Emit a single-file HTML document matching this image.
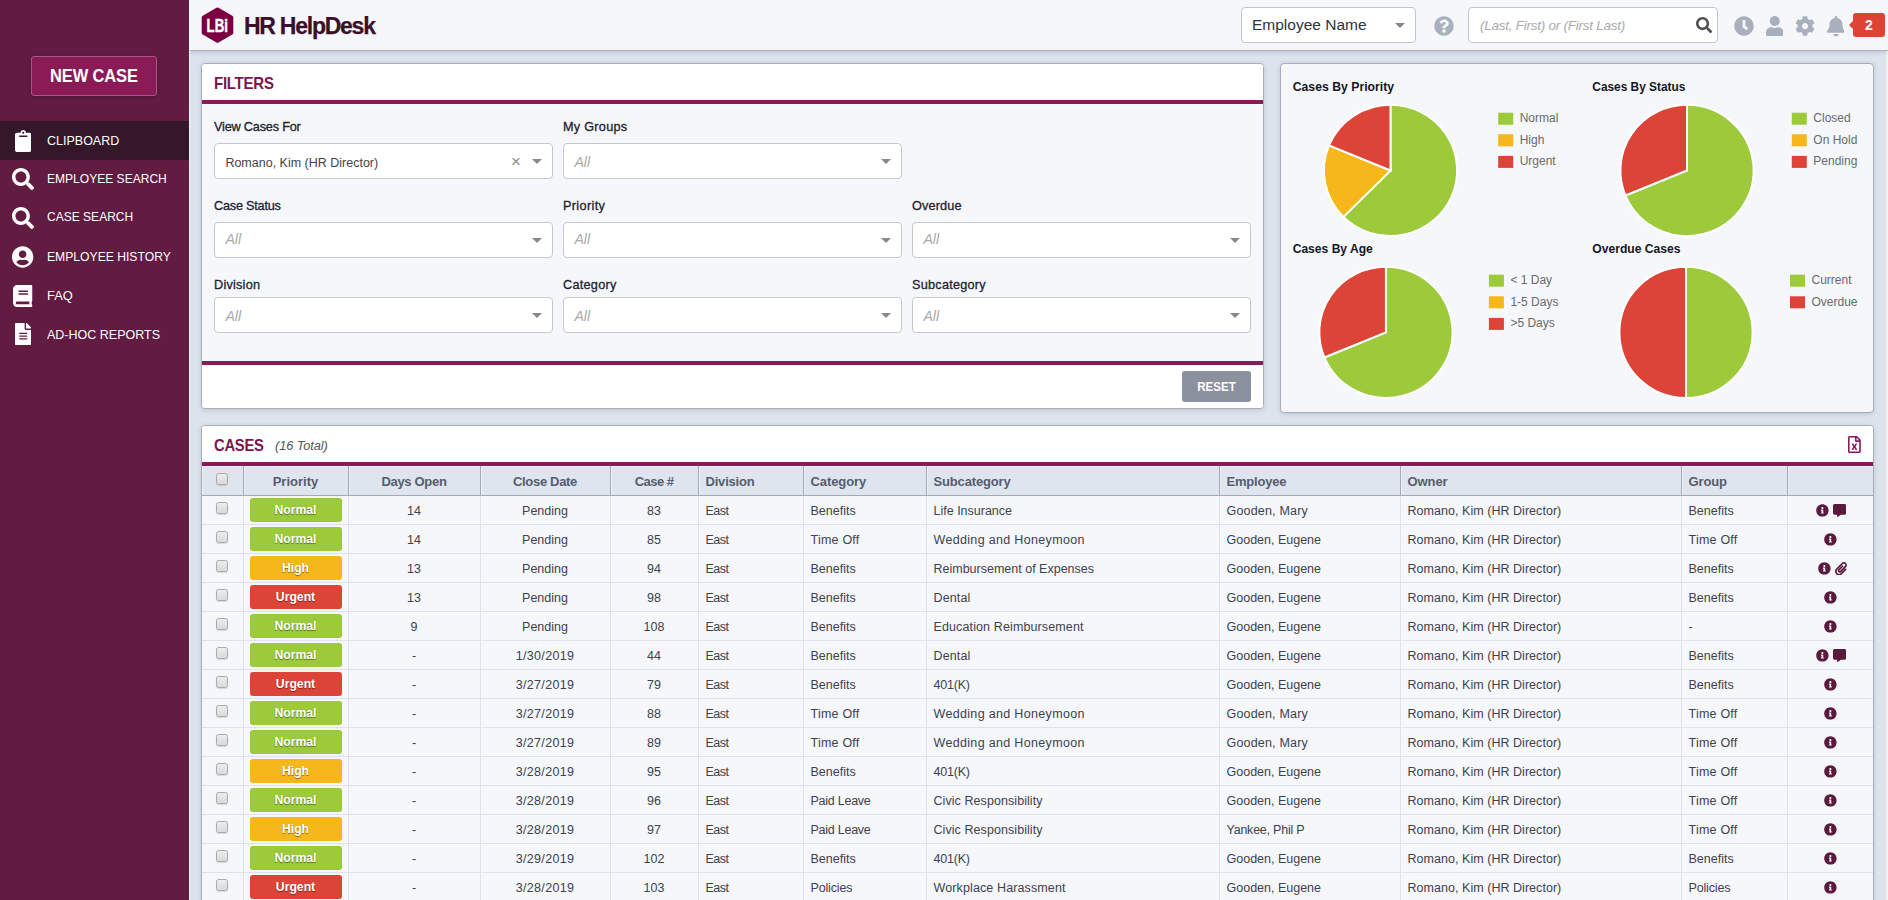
<!DOCTYPE html>
<html lang="en"><head><meta charset="utf-8"><title>HR HelpDesk</title>
<style>
*{box-sizing:border-box}
html,body{margin:0;padding:0}
html{width:1888px;height:900px;overflow:hidden}
body{width:1888px;height:900px;overflow:hidden;position:relative;background:#DDE3EC;font-family:"Liberation Sans",Arial,sans-serif;font-size:12.5px;color:#3a3f4a}
.ic{display:inline-block;vertical-align:middle}
#side{position:absolute;left:0;top:0;width:189px;height:900px;background:#621B41;box-shadow:1px 0 0 rgba(240,246,252,.8);z-index:5}
#newcase{position:absolute;left:31px;top:56px;width:126px;height:40px;border:1px solid #A55A84;border-radius:3px;background:#8A1B57;color:#fff;font-weight:bold;font-size:18px;line-height:39.4px;text-align:center;letter-spacing:-.15px;box-shadow:0 1px 3px rgba(0,0,0,.25)}
.nv{position:absolute;left:0;width:189px;height:38.8px;color:#fff}
.nv.act{background:#35172A}
.ni{position:absolute;left:3px;width:40px;top:0;height:38.8px;display:flex;align-items:center;justify-content:center}
.nt{position:absolute;left:47px;top:.6px;line-height:38.8px;font-size:13.5px;white-space:nowrap;transform-origin:0 50%;transform:scaleX(.905)}
#hdr{position:absolute;left:189px;top:0;width:1699px;height:51px;background:#F5F7FA;border-bottom:1px solid #A8AFBD;box-shadow:0 1px 5px rgba(60,75,100,.22);z-index:4}
#logo{position:absolute}
#ttl{position:absolute;left:55px;top:.8px;line-height:51px;font-size:23px;font-weight:bold;color:#3B0F28;letter-spacing:-1.25px;-webkit-text-stroke:.25px #3B0F28;white-space:nowrap}
.box{position:absolute;background:#fff;border:1px solid #C6C6C6;border-radius:4px}
.ar{position:absolute;width:0;height:0;border-left:5px solid transparent;border-right:5px solid transparent;border-top:5px solid #888}
.panel{position:absolute;border:1px solid #A6AEBD;border-radius:4px;background:#F5F7FB;box-shadow:0 1px 4px rgba(60,75,100,.2);overflow:hidden}
.ph{color:#AAA;font-style:italic;font-size:14.2px}
.pt{position:absolute;left:0;right:0;top:0;height:36px;background:#fff}
.pl{position:absolute;left:0;right:0;height:4px;background:#8A1A55}
.ptx{position:absolute;left:12px;top:.6px;line-height:37px;font-size:17px;font-weight:bold;color:#7C164C;letter-spacing:-.3px;white-space:nowrap;transform-origin:0 50%;transform:scaleX(.884)}
.lbl{position:absolute;font-size:12.7px;color:#1E2230;white-space:nowrap;line-height:16px;margin-top:.8px;-webkit-text-stroke:.3px #1E2230}
.sel{position:absolute;width:339px;height:36px;background:#fff;border:1px solid #C8C8C8;border-radius:4px;line-height:34px;padding-left:10.4px;white-space:nowrap}
.sel .ar{right:10px;top:15px}
.sel .sv{color:#444;font-size:12.5px}
.clr{position:absolute;right:31px;top:1px;font-size:17px;color:#8E8E8E}
#reset{position:absolute;left:980px;top:307px;width:69px;height:31px;border-radius:3px;background:#8B919E;color:#fff;font-weight:bold;font-size:13.5px;line-height:31.6px;text-align:center}
svg text{font-family:"Liberation Sans",Arial,sans-serif}
.ct{font-weight:bold;font-size:13.7px;fill:#15161F}
.lg text{font-size:12px;fill:#6A6A6A}
table{position:absolute;left:0;top:40px;width:1671px;border-collapse:collapse;table-layout:fixed}
th{height:29px;background:#DFE5EE;border-right:1px solid #A3ABBA;border-bottom:1px solid #A3ABBA;box-shadow:inset 1px 1px 0 rgba(255,255,255,.45);color:#555C6F;font-weight:bold;font-size:13px;text-align:left;padding:2.4px 0 0 7px}
td{height:29px;border-right:1px solid #DDE2EB;border-bottom:1px solid #DDE2EB;padding:2px 0 0 7px;color:#3E424C;white-space:nowrap;overflow:hidden}
th.c,td.c{text-align:center;padding-left:0}
th:last-child,td:last-child{border-right:0}
.cb{display:inline-block;width:12px;height:12px;border:1px solid #A9A9A9;border-radius:2.5px;background:linear-gradient(#ECECEC,#DADADA);box-shadow:0 1px 1px rgba(0,0,0,.12);vertical-align:middle;position:relative;top:-3px}
th .cb{top:-3.7px}
.pb{display:inline-block;width:92px;height:24px;border-radius:3px;color:#fff;font-weight:bold;font-size:12.2px;line-height:24.8px;text-shadow:0 1px 1px rgba(0,0,0,.45);vertical-align:middle;position:relative;top:-1px}
.pb.n{background:#9CCA3B}.pb.h{background:#F5B719}.pb.u{background:#DC4437}
.ics{font-size:0}
.w0{letter-spacing:-0.55px}.w1{letter-spacing:0.19px}.w2{letter-spacing:0.04px}.w3{letter-spacing:0.22px}.w4{letter-spacing:0.33px}.w5{letter-spacing:0.14px}.w6{letter-spacing:0.12px}.w7{letter-spacing:0.32px}.w8{letter-spacing:-0.2px}.w9{letter-spacing:-0.25px}.w10{letter-spacing:0.07px}.w11{letter-spacing:-0.23px}.w12{letter-spacing:-0.16px}
</style></head><body>

<div id="side">
<div id="newcase"><span style="display:inline-block;transform:scaleX(.915)">NEW CASE</span></div>
<div class="nv act" style="top:121px"><span class="ni"><svg class="ic" width="16.5" height="22" viewBox="0 0 384 512" style="position:relative;top:1px"><path fill="#fff" d="M384 112v352c0 26.51-21.49 48-48 48H48c-26.51 0-48-21.49-48-48V112c0-26.51 21.49-48 48-48h80c0-35.29 28.71-64 64-64s64 28.71 64 64h80c26.51 0 48 21.49 48 48zM192 40c-13.255 0-24 10.745-24 24s10.745 24 24 24 24-10.745 24-24-10.745-24-24-24m96 114v-20a6 6 0 0 0-6-6H102a6 6 0 0 0-6 6v20a6 6 0 0 0 6 6h180a6 6 0 0 0 6-6z"/></svg></span><span class="nt" style="transform:scaleX(0.926)">CLIPBOARD</span></div><div class="nv" style="top:159.8px"><span class="ni"><svg class="ic" width="22" height="22" viewBox="0 0 512 512" style=""><path fill="#fff" d="M505 442.7L405.3 343c-4.5-4.5-10.6-7-17-7H372c27.6-35.3 44-79.7 44-128C416 93.1 322.9 0 208 0S0 93.1 0 208s93.1 208 208 208c48.3 0 92.7-16.4 128-44v16.3c0 6.4 2.5 12.5 7 17l99.7 99.7c9.4 9.4 24.6 9.4 33.9 0l28.3-28.3c9.4-9.4 9.4-24.6.1-34zM208 336c-70.7 0-128-57.2-128-128 0-70.7 57.2-128 128-128 70.7 0 128 57.2 128 128 0 70.7-57.2 128-128 128z"/></svg></span><span class="nt" style="transform:scaleX(0.892)">EMPLOYEE SEARCH</span></div><div class="nv" style="top:198.6px"><span class="ni"><svg class="ic" width="22" height="22" viewBox="0 0 512 512" style=""><path fill="#fff" d="M505 442.7L405.3 343c-4.5-4.5-10.6-7-17-7H372c27.6-35.3 44-79.7 44-128C416 93.1 322.9 0 208 0S0 93.1 0 208s93.1 208 208 208c48.3 0 92.7-16.4 128-44v16.3c0 6.4 2.5 12.5 7 17l99.7 99.7c9.4 9.4 24.6 9.4 33.9 0l28.3-28.3c9.4-9.4 9.4-24.6.1-34zM208 336c-70.7 0-128-57.2-128-128 0-70.7 57.2-128 128-128 70.7 0 128 57.2 128 128 0 70.7-57.2 128-128 128z"/></svg></span><span class="nt" style="transform:scaleX(0.891);top:-.4px">CASE SEARCH</span></div><div class="nv" style="top:237.4px"><span class="ni"><svg class="ic" width="21.31" height="22" viewBox="0 0 496 512" style=""><path fill="#fff" d="M248 8C111 8 0 119 0 256s111 248 248 248 248-111 248-248S385 8 248 8zm0 96c48.6 0 88 39.4 88 88s-39.4 88-88 88-88-39.4-88-88 39.4-88 88-88zm0 344c-58.7 0-111.3-26.6-146.5-68.2 18.8-35.4 55.6-59.8 98.5-59.8 2.4 0 4.8.4 7.1 1.1 13 4.2 26.6 6.9 40.9 6.9 14.3 0 28-2.7 40.9-6.9 2.3-.7 4.7-1.1 7.1-1.1 42.9 0 79.7 24.4 98.5 59.8C359.3 421.4 306.7 448 248 448z"/></svg></span><span class="nt" style="transform:scaleX(0.9)">EMPLOYEE HISTORY</span></div><div class="nv" style="top:276.2px"><span class="ni"><svg class="ic" width="19.25" height="22" viewBox="0 0 448 512" style=""><path fill="#fff" d="M448 360V24c0-13.3-10.7-24-24-24H96C43 0 0 43 0 96v320c0 53 43 96 96 96h328c13.3 0 24-10.7 24-24v-16c0-7.5-3.5-14.3-8.9-18.7-4.2-15.4-4.2-59.3 0-74.7 5.4-4.3 8.9-11.1 8.9-18.6zM128 134c0-3.3 2.7-6 6-6h212c3.3 0 6 2.7 6 6v20c0 3.3-2.7 6-6 6H134c-3.3 0-6-2.7-6-6v-20zm0 64c0-3.3 2.7-6 6-6h212c3.3 0 6 2.7 6 6v20c0 3.3-2.7 6-6 6H134c-3.3 0-6-2.7-6-6v-20zm253.4 250H96c-17.7 0-32-14.3-32-32 0-17.6 14.4-32 32-32h285.4c-1.9 17.1-1.9 46.9 0 64z"/></svg></span><span class="nt" style="transform:scaleX(0.953)">FAQ</span></div><div class="nv" style="top:315px"><span class="ni"><svg class="ic" width="16.5" height="22" viewBox="0 0 384 512" style=""><path fill="#fff" d="M224 136V0H24C10.7 0 0 10.7 0 24v464c0 13.3 10.7 24 24 24h336c13.3 0 24-10.7 24-24V160H248c-13.2 0-24-10.8-24-24zm64 236c0 6.6-5.4 12-12 12H108c-6.6 0-12-5.4-12-12v-8c0-6.6 5.4-12 12-12h168c6.6 0 12 5.4 12 12v8zm0-64c0 6.6-5.4 12-12 12H108c-6.6 0-12-5.4-12-12v-8c0-6.6 5.4-12 12-12h168c6.6 0 12 5.4 12 12v8zm0-72v8c0 6.6-5.4 12-12 12H108c-6.6 0-12-5.4-12-12v-8c0-6.6 5.4-12 12-12h168c6.6 0 12 5.4 12 12zm96-114.1v6.1H256V0h6.1c6.4 0 12.5 2.5 17 7l97.9 98c4.5 4.5 7 10.6 7 16.9z"/></svg></span><span class="nt" style="transform:scaleX(0.926)">AD-HOC REPORTS</span></div>
</div>

<div id="hdr">
<svg id="logo" width="35" height="40" viewBox="0 0 35 40" style="left:11px;top:5px"><path d="M18.5 2.8L32.3 10.8Q33.3 11.4 33.3 12.5V27.9Q33.3 29 32.3 29.6L18.5 37.6Q17.5 38.2 16.5 37.6L2.7 29.6Q1.7 29 1.7 27.9V12.5Q1.7 11.4 2.7 10.8L16.5 2.8Q17.5 2.2 18.5 2.8Z" fill="#7B0041"/><text transform="translate(17.3 26.6) scale(.76 1)" x="0" y="0" text-anchor="middle" font-size="17.5" font-weight="bold" fill="#fff" stroke="#fff" stroke-width=".5">LBi</text></svg>
<div id="ttl">HR HelpDesk</div>
<div class="box" style="left:1052px;top:7px;width:175px;height:36px"><span style="position:absolute;left:10px;top:0;line-height:34px;font-size:15.5px;color:#2E3340;white-space:nowrap;margin-top:.4px">Employee Name</span><i class="ar" style="left:153px;top:15px"></i></div>
<div style="position:absolute;left:1245px;top:16px;line-height:0"><svg class="ic" width="20" height="20" viewBox="0 0 512 512" style=""><path fill="#A9B0BE" d="M504 256c0 136.997-111.043 248-248 248S8 392.997 8 256C8 119.083 119.043 8 256 8s248 111.083 248 248zM262.655 90c-54.497 0-89.255 22.957-116.549 63.758-3.536 5.286-2.353 12.415 2.715 16.258l34.699 26.31c5.205 3.947 12.621 3.008 16.665-2.122 17.864-22.658 30.113-35.797 57.303-35.797 20.429 0 45.698 13.148 45.698 32.958 0 14.976-12.363 22.667-32.534 33.976C247.128 238.528 216 254.941 216 296v4c0 6.627 5.373 12 12 12h56c6.627 0 12-5.373 12-12v-1.333c0-28.462 83.186-29.647 83.186-106.667 0-58.002-60.165-102-116.531-102zM256 338c-25.365 0-46 20.635-46 46 0 25.364 20.635 46 46 46s46-20.636 46-46c0-25.365-20.635-46-46-46z"/></svg></div>
<div class="box" style="left:1279px;top:7px;width:250px;height:36px"><span class="ph" style="position:absolute;left:11px;top:0;line-height:35px;font-size:13.5px;letter-spacing:-.25px;white-space:nowrap">(Last, First) or (First Last)</span><span style="position:absolute;left:227px;top:9px;line-height:0"><svg class="ic" width="16.2" height="16.2" viewBox="0 0 512 512" style=""><path fill="#525252" d="M505 442.7L405.3 343c-4.5-4.5-10.6-7-17-7H372c27.6-35.3 44-79.7 44-128C416 93.1 322.9 0 208 0S0 93.1 0 208s93.1 208 208 208c48.3 0 92.7-16.4 128-44v16.3c0 6.4 2.5 12.5 7 17l99.7 99.7c9.4 9.4 24.6 9.4 33.9 0l28.3-28.3c9.4-9.4 9.4-24.6.1-34zM208 336c-70.7 0-128-57.2-128-128 0-70.7 57.2-128 128-128 70.7 0 128 57.2 128 128 0 70.7-57.2 128-128 128z"/></svg></span></div>
<div style="position:absolute;left:1545px;top:16px;line-height:0"><svg class="ic" width="20" height="20" viewBox="0 0 512 512" style=""><path fill="#A8AFBD" d="M256 8C119 8 8 119 8 256s111 248 248 248 248-111 248-248S393 8 256 8zm57.1 350.1L224.9 294c-3.1-2.3-4.9-5.9-4.9-9.7V116c0-6.6 5.4-12 12-12h48c6.6 0 12 5.4 12 12v137.7l63.5 46.2c5.4 3.9 6.5 11.4 2.6 16.8l-28.2 38.8c-3.9 5.3-11.4 6.5-16.8 2.6z"/></svg></div>
<div style="position:absolute;left:1576.5px;top:16px;line-height:0"><svg class="ic" width="17.5" height="20" viewBox="0 0 448 512" style=""><path fill="#A8AFBD" d="M224 256c70.7 0 128-57.3 128-128S294.7 0 224 0 96 57.3 96 128s57.3 128 128 128zm89.6 32h-16.7c-22.2 10.2-46.9 16-72.9 16s-50.6-5.8-72.9-16h-16.7C60.2 288 0 348.2 0 422.4V464c0 26.5 21.5 48 48 48h352c26.5 0 48-21.5 48-48v-41.6c0-74.2-60.2-134.4-134.4-134.4z"/></svg></div>
<div style="position:absolute;left:1606px;top:16px;line-height:0"><svg class="ic" width="20" height="20" viewBox="0 0 512 512" style=""><path fill="#A8AFBD" d="M487.4 315.7l-42.6-24.6c4.3-23.2 4.3-47 0-70.2l42.6-24.6c4.9-2.8 7.1-8.6 5.5-14-11.1-35.6-30-67.8-54.7-94.6-3.8-4.1-10-5.1-14.8-2.3L380.8 110c-17.9-15.4-38.5-27.3-60.8-35.1V25.8c0-5.6-3.9-10.5-9.4-11.7-36.7-8.2-74.3-7.8-109.2 0-5.5 1.2-9.4 6.1-9.4 11.7V75c-22.2 7.9-42.8 19.8-60.8 35.1L88.7 85.5c-4.9-2.8-11-1.9-14.8 2.3-24.7 26.7-43.6 58.9-54.7 94.6-1.7 5.4.6 11.2 5.5 14L67.3 221c-4.3 23.2-4.3 47 0 70.2l-42.6 24.6c-4.9 2.8-7.1 8.6-5.5 14 11.1 35.6 30 67.8 54.7 94.6 3.8 4.1 10 5.1 14.8 2.3l42.6-24.6c17.9 15.4 38.5 27.3 60.8 35.1v49.2c0 5.6 3.9 10.5 9.4 11.7 36.7 8.2 74.3 7.8 109.2 0 5.5-1.2 9.4-6.1 9.4-11.7v-49.2c22.2-7.9 42.8-19.8 60.8-35.1l42.6 24.6c4.9 2.8 11 1.9 14.8-2.3 24.7-26.7 43.6-58.9 54.7-94.6 1.5-5.5-.7-11.3-5.6-14.1zM256 336c-44.1 0-80-35.9-80-80s35.9-80 80-80 80 35.9 80 80-35.9 80-80 80z"/></svg></div>
<div style="position:absolute;left:1637.5px;top:16px;line-height:0"><svg class="ic" width="17.94" height="20.5" viewBox="0 0 448 512" style=""><path fill="#A8AFBD" d="M224 512c35.32 0 63.97-28.65 63.97-64H160.03c0 35.35 28.65 64 63.97 64zm215.39-149.71c-19.32-20.76-55.47-51.99-55.47-154.29 0-77.7-54.48-139.9-127.94-155.16V32c0-17.67-14.32-32-31.98-32s-31.98 14.33-31.98 32v20.84C118.56 68.1 64.08 130.3 64.08 208c0 102.3-36.15 133.53-55.47 154.29-6 6.45-8.66 14.16-8.61 21.71.11 16.4 12.98 32 32.1 32h383.8c19.12 0 32-15.6 32.1-32 .05-7.55-2.61-15.27-8.61-21.71z"/></svg></div>
<div style="position:absolute;left:1664px;top:13px;width:32px;height:24px;border-radius:3px;background:#DD4436;color:#fff;font-weight:bold;font-size:14px;line-height:24px;text-align:center">2<i style="position:absolute;left:-4px;top:8px;width:0;height:0;border-top:4px solid transparent;border-bottom:4px solid transparent;border-right:4px solid #DD4436"></i></div>
</div>

<div class="panel" id="filters" style="left:201px;top:63px;width:1063px;height:346px">
<div class="pt"><span class="ptx">FILTERS</span></div>
<div class="pl" style="top:36px"></div>
<div class="lbl" style="left:12px;top:54px;letter-spacing:-0.19px">View Cases For</div>
<div class="lbl" style="left:361px;top:54px;letter-spacing:0.26px">My Groups</div>
<div class="lbl" style="left:12px;top:133px;letter-spacing:-0.22px">Case Status</div>
<div class="lbl" style="left:361px;top:133px;letter-spacing:0.34px">Priority</div>
<div class="lbl" style="left:710px;top:133px;letter-spacing:0.13px">Overdue</div>
<div class="lbl" style="left:12px;top:212px;letter-spacing:0.22px">Division</div>
<div class="lbl" style="left:361px;top:212px;letter-spacing:0.26px">Category</div>
<div class="lbl" style="left:710px;top:212px;letter-spacing:0.24px">Subcategory</div>
<div class="sel" style="left:12px;top:79px"><span class="sv" style="position:relative;top:1.8px">Romano, Kim (HR Director)</span><span class="clr">&#215;</span><i class="ar"></i></div><div class="sel" style="left:361px;top:79px"><span class="ph" style="position:relative;top:0.6px">All</span><i class="ar"></i></div><div class="sel" style="left:12px;top:158px"><span class="ph" style="position:relative;top:-0.6px">All</span><i class="ar"></i></div><div class="sel" style="left:361px;top:158px"><span class="ph" style="position:relative;top:-0.6px">All</span><i class="ar"></i></div><div class="sel" style="left:710px;top:158px"><span class="ph" style="position:relative;top:-0.6px">All</span><i class="ar"></i></div><div class="sel" style="left:12px;top:233px"><span class="ph" style="position:relative;top:0.9px">All</span><i class="ar"></i></div><div class="sel" style="left:361px;top:233px"><span class="ph" style="position:relative;top:0.9px">All</span><i class="ar"></i></div><div class="sel" style="left:710px;top:233px"><span class="ph" style="position:relative;top:0.9px">All</span><i class="ar"></i></div>
<div class="pl" style="top:297px"></div>
<div style="position:absolute;left:0;right:0;top:301px;bottom:0;background:#fff"></div>
<div id="reset"><span style="display:inline-block;transform:scaleX(0.858)">RESET</span></div>
</div>

<div class="panel" id="charts" style="left:1280px;top:63px;width:594px;height:350px">
<svg width="592" height="348" viewBox="1281 64 592 348" style="position:absolute;left:0;top:0">
<text class="ct" x="1292.7" y="91.2" textLength="101.4" lengthAdjust="spacingAndGlyphs">Cases By Priority</text>
<text class="ct" x="1592.3" y="91.2" textLength="93.1" lengthAdjust="spacingAndGlyphs">Cases By Status</text>
<text class="ct" x="1292.7" y="253.2" textLength="80.1" lengthAdjust="spacingAndGlyphs">Cases By Age</text>
<text class="ct" x="1592.3" y="253.2" textLength="88.3" lengthAdjust="spacingAndGlyphs">Overdue Cases</text>
<path d="M1390.5 170.45L1390.5 104.85A66.6 65.6 0 1 1 1343.41 216.84Z" fill="#9CCA3B" stroke="#fff" stroke-width="2"/><path d="M1390.5 170.45L1343.41 216.84A66.6 65.6 0 0 1 1328.97 145.35Z" fill="#F5B719" stroke="#fff" stroke-width="2"/><path d="M1390.5 170.45L1328.97 145.35A66.6 65.6 0 0 1 1390.5 104.85Z" fill="#DC4437" stroke="#fff" stroke-width="2"/><path d="M1687 170.45L1687 104.85A66.6 65.6 0 1 1 1625.47 195.55Z" fill="#9CCA3B" stroke="#fff" stroke-width="2"/><path d="M1687 170.45L1625.47 195.55A66.6 65.6 0 0 1 1687 104.85Z" fill="#DC4437" stroke="#fff" stroke-width="2"/><path d="M1385.9 332.4L1385.9 266.8A66.6 65.6 0 1 1 1324.37 357.5Z" fill="#9CCA3B" stroke="#fff" stroke-width="2"/><path d="M1385.9 332.4L1324.37 357.5A66.6 65.6 0 0 1 1385.9 266.8Z" fill="#DC4437" stroke="#fff" stroke-width="2"/><path d="M1686 332.4L1686 266.8A66.6 65.6 0 0 1 1686 398Z" fill="#9CCA3B" stroke="#fff" stroke-width="2"/><path d="M1686 332.4L1686 398A66.6 65.6 0 0 1 1686 266.8Z" fill="#DC4437" stroke="#fff" stroke-width="2"/>
<g class="lg"><rect x="1498.2" y="112.7" width="15" height="12" fill="#9CCA3B"/><text x="1519.7" y="122">Normal</text><rect x="1498.2" y="134.3" width="15" height="12" fill="#F5B719"/><text x="1519.7" y="143.6">High</text><rect x="1498.2" y="155.9" width="15" height="12" fill="#DC4437"/><text x="1519.7" y="165.2">Urgent</text><rect x="1791.8" y="112.7" width="15" height="12" fill="#9CCA3B"/><text x="1813.3" y="122">Closed</text><rect x="1791.8" y="134.3" width="15" height="12" fill="#F5B719"/><text x="1813.3" y="143.6">On Hold</text><rect x="1791.8" y="155.9" width="15" height="12" fill="#DC4437"/><text x="1813.3" y="165.2">Pending</text><rect x="1488.9" y="274.7" width="15" height="12" fill="#9CCA3B"/><text x="1510.4" y="284">&lt; 1 Day</text><rect x="1488.9" y="296.3" width="15" height="12" fill="#F5B719"/><text x="1510.4" y="305.6">1-5 Days</text><rect x="1488.9" y="317.9" width="15" height="12" fill="#DC4437"/><text x="1510.4" y="327.2">&gt;5 Days</text><rect x="1790" y="274.7" width="15" height="12" fill="#9CCA3B"/><text x="1811.5" y="284">Current</text><rect x="1790" y="296.3" width="15" height="12" fill="#DC4437"/><text x="1811.5" y="305.6">Overdue</text></g>
</svg>
</div>

<div class="panel" id="cases" style="left:201px;top:425px;width:1673px;height:490px">
<div class="pt"><span class="ptx" style="transform:scaleX(.87)">CASES</span><span style="position:absolute;left:73px;top:.7px;line-height:37px;font-style:italic;font-size:12.8px;color:#555;letter-spacing:-.1px;white-space:nowrap">(16 Total)</span>
<span style="position:absolute;right:12px;top:10px;line-height:0"><svg class="ic" width="12.83" height="17.1" viewBox="0 0 384 512" style=""><path fill="#8A1A55" d="M369.9 97.9L286 14C277 5 264.8-.1 252.1-.1H48C21.5 0 0 21.5 0 48v416c0 26.5 21.5 48 48 48h288c26.5 0 48-21.5 48-48V131.9c0-12.7-5.1-25-14.1-34zM332.1 128H256V51.9l76.1 76.1zM48 464V48h160v104c0 13.3 10.7 24 24 24h104v288H48zm212-240h-28.8c-4.4 0-8.4 2.4-10.5 6.3-18 33.1-22.2 42.4-28.6 57.7-13.9-29.1-6.9-17.3-28.6-57.7-2.1-3.9-6.2-6.3-10.6-6.3H124c-9.3 0-15 10-10.4 18l46.3 78-46.3 78c-4.7 8 1.1 18 10.4 18h28.9c4.4 0 8.4-2.4 10.5-6.3 21.7-40 23-45 28.6-57.7 14.9 30.2 5.9 15.9 28.6 57.7 2.1 3.9 6.2 6.3 10.6 6.3H260c9.3 0 15-10 10.4-18L224 320c.7-1.1 30.3-50.5 46.3-78 4.7-8-1.1-18-10.3-18z"/></svg></span></div>
<div class="pl" style="top:36px"></div>
<table>
<colgroup><col style="width:41px"><col style="width:105px"><col style="width:132px"><col style="width:130px"><col style="width:88px"><col style="width:105px"><col style="width:123px"><col style="width:293px"><col style="width:181px"><col style="width:281px"><col style="width:106px"><col style="width:86px"></colgroup>
<thead><tr><th class="c"><span class="cb"></span></th><th class="c" style="letter-spacing:0.02px">Priority</th><th class="c" style="letter-spacing:-0.32px">Days Open</th><th class="c" style="letter-spacing:-0.32px">Close Date</th><th class="c" style="letter-spacing:-0.54px">Case #</th><th style="letter-spacing:-0.2px">Division</th><th style="letter-spacing:-0.08px">Category</th><th style="letter-spacing:-0.16px">Subcategory</th><th style="letter-spacing:-0.21px">Employee</th><th style="letter-spacing:-0.09px">Owner</th><th style="letter-spacing:-0.14px">Group</th><th></th></tr></thead>
<tbody>
<tr><td class="c"><span class="cb"></span></td><td class="c"><span class="pb n">Normal</span></td><td class="c">14</td><td class="c">Pending</td><td class="c">83</td><td><span class="w0">East</span></td><td>Benefits</td><td>Life Insurance</td><td><span class="w1">Gooden, Mary</span></td><td><span class="w2">Romano, Kim (HR Director)</span></td><td>Benefits</td><td class="c ics"><svg class="ic" width="12.8" height="12.8" viewBox="0 0 512 512" style="position:relative;top:.4px;margin-left:2px"><path fill="#5A1A3D" d="M256 8C119.043 8 8 119.083 8 256c0 136.997 111.043 248 248 248s248-111.003 248-248C504 119.083 392.957 8 256 8zm0 110c23.196 0 42 18.804 42 42s-18.804 42-42 42-42-18.804-42-42 18.804-42 42-42zm56 254c0 6.627-5.373 12-12 12h-88c-6.627 0-12-5.373-12-12v-24c0-6.627 5.373-12 12-12h12v-64h-12c-6.627 0-12-5.373-12-12v-24c0-6.627 5.373-12 12-12h64c6.627 0 12 5.373 12 12v100h12c6.627 0 12 5.373 12 12v24z"/></svg><svg class="ic" width="13.2" height="13.2" viewBox="0 0 512 512" style="margin-left:4.2px;position:relative;top:-.3px"><path fill="#5A1A3D" d="M448 0H64C28.7 0 0 28.7 0 64v288c0 35.3 28.7 64 64 64h96v84c0 9.8 11.2 15.5 19.1 9.7L304 416h144c35.3 0 64-28.7 64-64V64c0-35.3-28.7-64-64-64z"/></svg></td></tr>
<tr><td class="c"><span class="cb"></span></td><td class="c"><span class="pb n">Normal</span></td><td class="c">14</td><td class="c">Pending</td><td class="c">85</td><td><span class="w0">East</span></td><td><span class="w3">Time Off</span></td><td><span class="w4">Wedding and Honeymoon</span></td><td>Gooden, Eugene</td><td><span class="w2">Romano, Kim (HR Director)</span></td><td><span class="w3">Time Off</span></td><td class="c ics"><svg class="ic" width="12.8" height="12.8" viewBox="0 0 512 512" style="position:relative;top:.4px;margin-left:1px"><path fill="#5A1A3D" d="M256 8C119.043 8 8 119.083 8 256c0 136.997 111.043 248 248 248s248-111.003 248-248C504 119.083 392.957 8 256 8zm0 110c23.196 0 42 18.804 42 42s-18.804 42-42 42-42-18.804-42-42 18.804-42 42-42zm56 254c0 6.627-5.373 12-12 12h-88c-6.627 0-12-5.373-12-12v-24c0-6.627 5.373-12 12-12h12v-64h-12c-6.627 0-12-5.373-12-12v-24c0-6.627 5.373-12 12-12h64c6.627 0 12 5.373 12 12v100h12c6.627 0 12 5.373 12 12v24z"/></svg></td></tr>
<tr><td class="c"><span class="cb"></span></td><td class="c"><span class="pb h">High</span></td><td class="c">13</td><td class="c">Pending</td><td class="c">94</td><td><span class="w0">East</span></td><td>Benefits</td><td>Reimbursement of Expenses</td><td>Gooden, Eugene</td><td><span class="w2">Romano, Kim (HR Director)</span></td><td>Benefits</td><td class="c ics"><svg class="ic" width="12.8" height="12.8" viewBox="0 0 512 512" style="position:relative;top:.4px;margin-left:4px"><path fill="#5A1A3D" d="M256 8C119.043 8 8 119.083 8 256c0 136.997 111.043 248 248 248s248-111.003 248-248C504 119.083 392.957 8 256 8zm0 110c23.196 0 42 18.804 42 42s-18.804 42-42 42-42-18.804-42-42 18.804-42 42-42zm56 254c0 6.627-5.373 12-12 12h-88c-6.627 0-12-5.373-12-12v-24c0-6.627 5.373-12 12-12h12v-64h-12c-6.627 0-12-5.373-12-12v-24c0-6.627 5.373-12 12-12h64c6.627 0 12 5.373 12 12v100h12c6.627 0 12 5.373 12 12v24z"/></svg><svg class="ic" width="11.9" height="13.6" viewBox="0 0 448 512" style="margin-left:4.4px"><path fill="#5A1A3D" d="M43.246 466.142c-58.43-60.289-57.341-157.511 1.386-217.581L254.392 34c44.316-45.332 116.351-45.336 160.671 0 43.89 44.894 43.943 117.329 0 162.276L232.214 383.128c-29.855 30.537-78.633 30.111-107.982-.998-28.275-29.97-27.368-77.473 1.452-106.953l143.743-146.835c6.182-6.314 16.312-6.422 22.626-.241l22.861 22.379c6.315 6.182 6.422 16.312.241 22.626L171.427 319.927c-4.932 5.045-5.236 13.428-.648 18.292 4.372 4.634 11.245 4.711 15.688.165l182.849-186.851c19.613-20.062 19.613-52.725-.011-72.798-19.189-19.627-49.957-19.637-69.154 0L90.39 293.295c-34.763 35.56-35.299 93.12-1.191 128.313 34.01 35.093 88.985 35.137 123.058.286l172.06-175.999c6.177-6.319 16.307-6.433 22.626-.256l22.877 22.364c6.319 6.177 6.434 16.307.256 22.626l-172.06 175.998c-59.576 60.938-155.943 60.216-214.77-.485z"/></svg></td></tr>
<tr><td class="c"><span class="cb"></span></td><td class="c"><span class="pb u">Urgent</span></td><td class="c">13</td><td class="c">Pending</td><td class="c">98</td><td><span class="w0">East</span></td><td>Benefits</td><td><span class="w5">Dental</span></td><td>Gooden, Eugene</td><td><span class="w2">Romano, Kim (HR Director)</span></td><td>Benefits</td><td class="c ics"><svg class="ic" width="12.8" height="12.8" viewBox="0 0 512 512" style="position:relative;top:.4px;margin-left:1px"><path fill="#5A1A3D" d="M256 8C119.043 8 8 119.083 8 256c0 136.997 111.043 248 248 248s248-111.003 248-248C504 119.083 392.957 8 256 8zm0 110c23.196 0 42 18.804 42 42s-18.804 42-42 42-42-18.804-42-42 18.804-42 42-42zm56 254c0 6.627-5.373 12-12 12h-88c-6.627 0-12-5.373-12-12v-24c0-6.627 5.373-12 12-12h12v-64h-12c-6.627 0-12-5.373-12-12v-24c0-6.627 5.373-12 12-12h64c6.627 0 12 5.373 12 12v100h12c6.627 0 12 5.373 12 12v24z"/></svg></td></tr>
<tr><td class="c"><span class="cb"></span></td><td class="c"><span class="pb n">Normal</span></td><td class="c">9</td><td class="c">Pending</td><td class="c">108</td><td><span class="w0">East</span></td><td>Benefits</td><td><span class="w6">Education Reimbursement</span></td><td>Gooden, Eugene</td><td><span class="w2">Romano, Kim (HR Director)</span></td><td>-</td><td class="c ics"><svg class="ic" width="12.8" height="12.8" viewBox="0 0 512 512" style="position:relative;top:.4px;margin-left:1px"><path fill="#5A1A3D" d="M256 8C119.043 8 8 119.083 8 256c0 136.997 111.043 248 248 248s248-111.003 248-248C504 119.083 392.957 8 256 8zm0 110c23.196 0 42 18.804 42 42s-18.804 42-42 42-42-18.804-42-42 18.804-42 42-42zm56 254c0 6.627-5.373 12-12 12h-88c-6.627 0-12-5.373-12-12v-24c0-6.627 5.373-12 12-12h12v-64h-12c-6.627 0-12-5.373-12-12v-24c0-6.627 5.373-12 12-12h64c6.627 0 12 5.373 12 12v100h12c6.627 0 12 5.373 12 12v24z"/></svg></td></tr>
<tr><td class="c"><span class="cb"></span></td><td class="c"><span class="pb n">Normal</span></td><td class="c">-</td><td class="c"><span class="w7">1/30/2019</span></td><td class="c">44</td><td><span class="w0">East</span></td><td>Benefits</td><td><span class="w5">Dental</span></td><td>Gooden, Eugene</td><td><span class="w2">Romano, Kim (HR Director)</span></td><td>Benefits</td><td class="c ics"><svg class="ic" width="12.8" height="12.8" viewBox="0 0 512 512" style="position:relative;top:.4px;margin-left:2px"><path fill="#5A1A3D" d="M256 8C119.043 8 8 119.083 8 256c0 136.997 111.043 248 248 248s248-111.003 248-248C504 119.083 392.957 8 256 8zm0 110c23.196 0 42 18.804 42 42s-18.804 42-42 42-42-18.804-42-42 18.804-42 42-42zm56 254c0 6.627-5.373 12-12 12h-88c-6.627 0-12-5.373-12-12v-24c0-6.627 5.373-12 12-12h12v-64h-12c-6.627 0-12-5.373-12-12v-24c0-6.627 5.373-12 12-12h64c6.627 0 12 5.373 12 12v100h12c6.627 0 12 5.373 12 12v24z"/></svg><svg class="ic" width="13.2" height="13.2" viewBox="0 0 512 512" style="margin-left:4.2px;position:relative;top:-.3px"><path fill="#5A1A3D" d="M448 0H64C28.7 0 0 28.7 0 64v288c0 35.3 28.7 64 64 64h96v84c0 9.8 11.2 15.5 19.1 9.7L304 416h144c35.3 0 64-28.7 64-64V64c0-35.3-28.7-64-64-64z"/></svg></td></tr>
<tr><td class="c"><span class="cb"></span></td><td class="c"><span class="pb u">Urgent</span></td><td class="c">-</td><td class="c"><span class="w7">3/27/2019</span></td><td class="c">79</td><td><span class="w0">East</span></td><td>Benefits</td><td><span class="w8">401(K)</span></td><td>Gooden, Eugene</td><td><span class="w2">Romano, Kim (HR Director)</span></td><td>Benefits</td><td class="c ics"><svg class="ic" width="12.8" height="12.8" viewBox="0 0 512 512" style="position:relative;top:.4px;margin-left:1px"><path fill="#5A1A3D" d="M256 8C119.043 8 8 119.083 8 256c0 136.997 111.043 248 248 248s248-111.003 248-248C504 119.083 392.957 8 256 8zm0 110c23.196 0 42 18.804 42 42s-18.804 42-42 42-42-18.804-42-42 18.804-42 42-42zm56 254c0 6.627-5.373 12-12 12h-88c-6.627 0-12-5.373-12-12v-24c0-6.627 5.373-12 12-12h12v-64h-12c-6.627 0-12-5.373-12-12v-24c0-6.627 5.373-12 12-12h64c6.627 0 12 5.373 12 12v100h12c6.627 0 12 5.373 12 12v24z"/></svg></td></tr>
<tr><td class="c"><span class="cb"></span></td><td class="c"><span class="pb n">Normal</span></td><td class="c">-</td><td class="c"><span class="w7">3/27/2019</span></td><td class="c">88</td><td><span class="w0">East</span></td><td><span class="w3">Time Off</span></td><td><span class="w4">Wedding and Honeymoon</span></td><td><span class="w1">Gooden, Mary</span></td><td><span class="w2">Romano, Kim (HR Director)</span></td><td><span class="w3">Time Off</span></td><td class="c ics"><svg class="ic" width="12.8" height="12.8" viewBox="0 0 512 512" style="position:relative;top:.4px;margin-left:1px"><path fill="#5A1A3D" d="M256 8C119.043 8 8 119.083 8 256c0 136.997 111.043 248 248 248s248-111.003 248-248C504 119.083 392.957 8 256 8zm0 110c23.196 0 42 18.804 42 42s-18.804 42-42 42-42-18.804-42-42 18.804-42 42-42zm56 254c0 6.627-5.373 12-12 12h-88c-6.627 0-12-5.373-12-12v-24c0-6.627 5.373-12 12-12h12v-64h-12c-6.627 0-12-5.373-12-12v-24c0-6.627 5.373-12 12-12h64c6.627 0 12 5.373 12 12v100h12c6.627 0 12 5.373 12 12v24z"/></svg></td></tr>
<tr><td class="c"><span class="cb"></span></td><td class="c"><span class="pb n">Normal</span></td><td class="c">-</td><td class="c"><span class="w7">3/27/2019</span></td><td class="c">89</td><td><span class="w0">East</span></td><td><span class="w3">Time Off</span></td><td><span class="w4">Wedding and Honeymoon</span></td><td><span class="w1">Gooden, Mary</span></td><td><span class="w2">Romano, Kim (HR Director)</span></td><td><span class="w3">Time Off</span></td><td class="c ics"><svg class="ic" width="12.8" height="12.8" viewBox="0 0 512 512" style="position:relative;top:.4px;margin-left:1px"><path fill="#5A1A3D" d="M256 8C119.043 8 8 119.083 8 256c0 136.997 111.043 248 248 248s248-111.003 248-248C504 119.083 392.957 8 256 8zm0 110c23.196 0 42 18.804 42 42s-18.804 42-42 42-42-18.804-42-42 18.804-42 42-42zm56 254c0 6.627-5.373 12-12 12h-88c-6.627 0-12-5.373-12-12v-24c0-6.627 5.373-12 12-12h12v-64h-12c-6.627 0-12-5.373-12-12v-24c0-6.627 5.373-12 12-12h64c6.627 0 12 5.373 12 12v100h12c6.627 0 12 5.373 12 12v24z"/></svg></td></tr>
<tr><td class="c"><span class="cb"></span></td><td class="c"><span class="pb h">High</span></td><td class="c">-</td><td class="c"><span class="w7">3/28/2019</span></td><td class="c">95</td><td><span class="w0">East</span></td><td>Benefits</td><td><span class="w8">401(K)</span></td><td>Gooden, Eugene</td><td><span class="w2">Romano, Kim (HR Director)</span></td><td><span class="w3">Time Off</span></td><td class="c ics"><svg class="ic" width="12.8" height="12.8" viewBox="0 0 512 512" style="position:relative;top:.4px;margin-left:1px"><path fill="#5A1A3D" d="M256 8C119.043 8 8 119.083 8 256c0 136.997 111.043 248 248 248s248-111.003 248-248C504 119.083 392.957 8 256 8zm0 110c23.196 0 42 18.804 42 42s-18.804 42-42 42-42-18.804-42-42 18.804-42 42-42zm56 254c0 6.627-5.373 12-12 12h-88c-6.627 0-12-5.373-12-12v-24c0-6.627 5.373-12 12-12h12v-64h-12c-6.627 0-12-5.373-12-12v-24c0-6.627 5.373-12 12-12h64c6.627 0 12 5.373 12 12v100h12c6.627 0 12 5.373 12 12v24z"/></svg></td></tr>
<tr><td class="c"><span class="cb"></span></td><td class="c"><span class="pb n">Normal</span></td><td class="c">-</td><td class="c"><span class="w7">3/28/2019</span></td><td class="c">96</td><td><span class="w0">East</span></td><td><span class="w9">Paid Leave</span></td><td><span class="w10">Civic Responsibility</span></td><td>Gooden, Eugene</td><td><span class="w2">Romano, Kim (HR Director)</span></td><td><span class="w3">Time Off</span></td><td class="c ics"><svg class="ic" width="12.8" height="12.8" viewBox="0 0 512 512" style="position:relative;top:.4px;margin-left:1px"><path fill="#5A1A3D" d="M256 8C119.043 8 8 119.083 8 256c0 136.997 111.043 248 248 248s248-111.003 248-248C504 119.083 392.957 8 256 8zm0 110c23.196 0 42 18.804 42 42s-18.804 42-42 42-42-18.804-42-42 18.804-42 42-42zm56 254c0 6.627-5.373 12-12 12h-88c-6.627 0-12-5.373-12-12v-24c0-6.627 5.373-12 12-12h12v-64h-12c-6.627 0-12-5.373-12-12v-24c0-6.627 5.373-12 12-12h64c6.627 0 12 5.373 12 12v100h12c6.627 0 12 5.373 12 12v24z"/></svg></td></tr>
<tr><td class="c"><span class="cb"></span></td><td class="c"><span class="pb h">High</span></td><td class="c">-</td><td class="c"><span class="w7">3/28/2019</span></td><td class="c">97</td><td><span class="w0">East</span></td><td><span class="w9">Paid Leave</span></td><td><span class="w10">Civic Responsibility</span></td><td><span class="w11">Yankee, Phil P</span></td><td><span class="w2">Romano, Kim (HR Director)</span></td><td><span class="w3">Time Off</span></td><td class="c ics"><svg class="ic" width="12.8" height="12.8" viewBox="0 0 512 512" style="position:relative;top:.4px;margin-left:1px"><path fill="#5A1A3D" d="M256 8C119.043 8 8 119.083 8 256c0 136.997 111.043 248 248 248s248-111.003 248-248C504 119.083 392.957 8 256 8zm0 110c23.196 0 42 18.804 42 42s-18.804 42-42 42-42-18.804-42-42 18.804-42 42-42zm56 254c0 6.627-5.373 12-12 12h-88c-6.627 0-12-5.373-12-12v-24c0-6.627 5.373-12 12-12h12v-64h-12c-6.627 0-12-5.373-12-12v-24c0-6.627 5.373-12 12-12h64c6.627 0 12 5.373 12 12v100h12c6.627 0 12 5.373 12 12v24z"/></svg></td></tr>
<tr><td class="c"><span class="cb"></span></td><td class="c"><span class="pb n">Normal</span></td><td class="c">-</td><td class="c"><span class="w7">3/29/2019</span></td><td class="c">102</td><td><span class="w0">East</span></td><td>Benefits</td><td><span class="w8">401(K)</span></td><td>Gooden, Eugene</td><td><span class="w2">Romano, Kim (HR Director)</span></td><td>Benefits</td><td class="c ics"><svg class="ic" width="12.8" height="12.8" viewBox="0 0 512 512" style="position:relative;top:.4px;margin-left:1px"><path fill="#5A1A3D" d="M256 8C119.043 8 8 119.083 8 256c0 136.997 111.043 248 248 248s248-111.003 248-248C504 119.083 392.957 8 256 8zm0 110c23.196 0 42 18.804 42 42s-18.804 42-42 42-42-18.804-42-42 18.804-42 42-42zm56 254c0 6.627-5.373 12-12 12h-88c-6.627 0-12-5.373-12-12v-24c0-6.627 5.373-12 12-12h12v-64h-12c-6.627 0-12-5.373-12-12v-24c0-6.627 5.373-12 12-12h64c6.627 0 12 5.373 12 12v100h12c6.627 0 12 5.373 12 12v24z"/></svg></td></tr>
<tr><td class="c"><span class="cb"></span></td><td class="c"><span class="pb u">Urgent</span></td><td class="c">-</td><td class="c"><span class="w7">3/28/2019</span></td><td class="c">103</td><td><span class="w0">East</span></td><td><span class="w12">Policies</span></td><td><span class="w6">Workplace Harassment</span></td><td>Gooden, Eugene</td><td><span class="w2">Romano, Kim (HR Director)</span></td><td><span class="w12">Policies</span></td><td class="c ics"><svg class="ic" width="12.8" height="12.8" viewBox="0 0 512 512" style="position:relative;top:.4px;margin-left:1px"><path fill="#5A1A3D" d="M256 8C119.043 8 8 119.083 8 256c0 136.997 111.043 248 248 248s248-111.003 248-248C504 119.083 392.957 8 256 8zm0 110c23.196 0 42 18.804 42 42s-18.804 42-42 42-42-18.804-42-42 18.804-42 42-42zm56 254c0 6.627-5.373 12-12 12h-88c-6.627 0-12-5.373-12-12v-24c0-6.627 5.373-12 12-12h12v-64h-12c-6.627 0-12-5.373-12-12v-24c0-6.627 5.373-12 12-12h64c6.627 0 12 5.373 12 12v100h12c6.627 0 12 5.373 12 12v24z"/></svg></td></tr>
</tbody></table>
</div>

<div style="position:absolute;left:1886px;top:51px;width:2px;height:849px;background:#F1F1F1;z-index:3"></div>
</body></html>
